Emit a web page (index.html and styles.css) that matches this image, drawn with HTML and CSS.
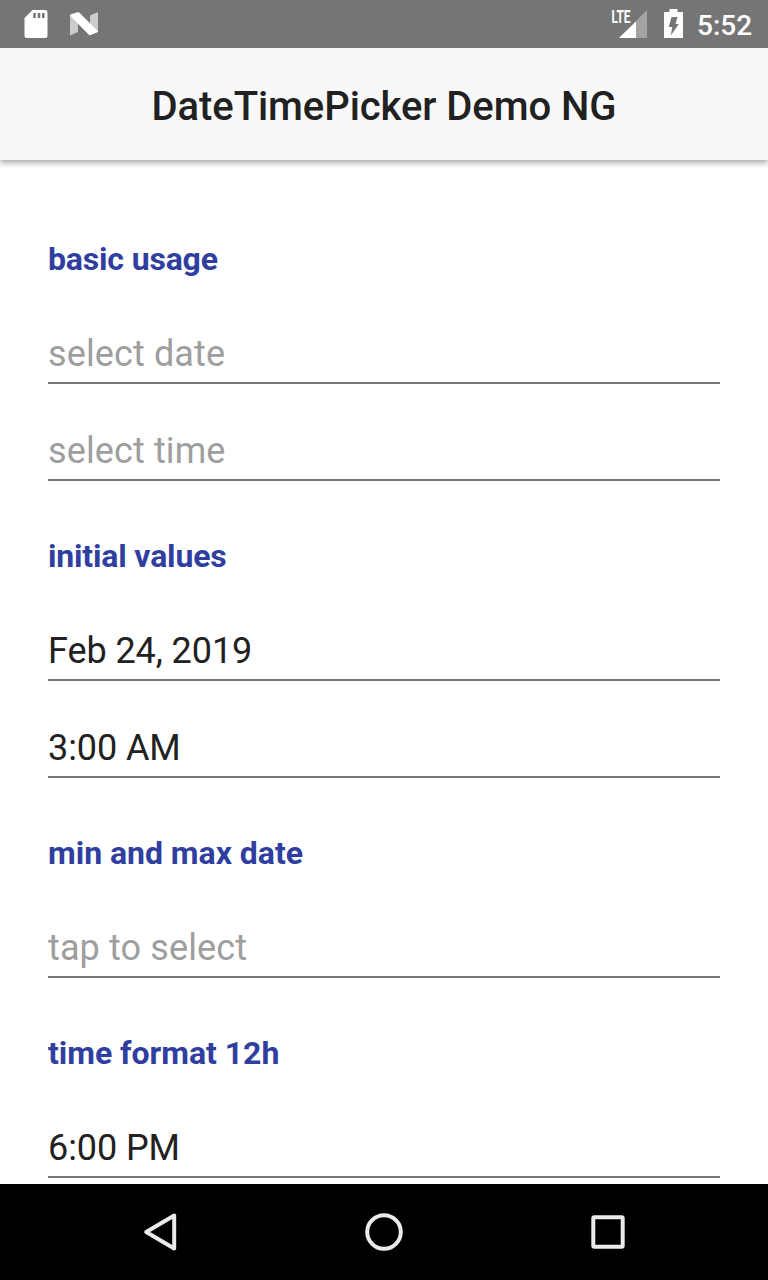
FILE: index.html
```html
<!DOCTYPE html>
<html lang="en">
<head>
<meta charset="utf-8">
<title>DateTimePicker Demo NG</title>
<link rel="stylesheet" href="styles.css">
</head>
<body>
<div class="screen">
  <header class="status">
    <svg class="status-left" width="110" height="48" viewBox="0 0 110 48">
      <path fill="#fff" d="M32.500 10H45q2.500 0 2.500 2.500v23q0 2.500-2.500 2.500H27q-2.500 0-2.500-2.500V18z"/>
      <path stroke="#757575" stroke-width="2.500" d="M34.500 13v5M39 13v5M43.300 13v5"/>
      <path fill="#ccc" d="M70 15l8 6v11l-8 3.500zM90 15.500l8-3.500v20l-8-6z"/>
      <path fill="#fff" d="M70 15.500q0-.8 1-1.200l6.500-2.100q1-.3 2 .6L98 31.200q0 .8-1 1.200l-6.500 2.700q-1 .3-2-.6z"/>
    </svg>
    <svg class="status-right" width="76" height="48" viewBox="610 0 76 48">
      <path fill="#a3a3a3" d="M647 10v28h-28z"/>
      <path fill="#fff" d="M636 21.500V38h-17z"/>
      <text class="network" x="611.500" y="22.800" textLength="19" lengthAdjust="spacingAndGlyphs">LTE</text>
      <path fill="#fff" d="M669.500 9h8v3h5.500v26h-19V12h5.500z"/>
      <path fill="#757575" d="M671.500 17h6l-2 7h3.300l-8 11.500 1.500-8.500h-3.500z"/>
    </svg>
    <span class="clock">5:52</span>
  </header>
  <div class="action-bar"><h1 class="title">DateTimePicker Demo NG</h1></div>
  <main class="content">
    <h2 class="label tight">basic usage</h2>
    <div class="field hint">select date</div>
    <div class="field hint">select time</div>
    <h2 class="label tight">initial values</h2>
    <div class="field">Feb 24, 2019</div>
    <div class="field">3:00 AM</div>
    <h2 class="label">min and max date</h2>
    <div class="field hint">tap to select</div>
    <h2 class="label">time format 12h</h2>
    <div class="field">6:00 PM</div>
  </main>
  <nav class="nav">
    <svg width="48" height="48" viewBox="136 1208 48 48"><path d="M174.200 1215.500v33l-28-16.500z"/></svg>
    <svg width="48" height="48" viewBox="360 1208 48 48"><circle cx="384" cy="1232" r="16.800"/></svg>
    <svg width="48" height="48" viewBox="584 1208 48 48"><rect x="593.300" y="1217.300" width="29.400" height="29.400" rx="1"/></svg>
  </nav>
</div>
</body>
</html>
```
FILE: styles.css
```css
body { margin: 0; background: #fff; font-family: Roboto, sans-serif; }
.screen { display: flex; flex-direction: column; height: 1280px; overflow: hidden; }
.status { display: flex; flex: none; height: 48px; background: #757575; color: #fff; }
.status-right { margin-left: auto; }
.network { fill: #fff; font-size: 18px; font-weight: 700; }
.clock { width: 82px; box-sizing: border-box; padding-left: 11px; font-size: 28px; line-height: 51px; font-weight: 500; white-space: nowrap; }
.action-bar { flex: none; display: flex; justify-content: center; height: 112px; background: #f8f8f8; box-shadow: 0 3px 6px rgba(0,0,0,.33); clip-path: inset(0 0 -12px); }
.title { margin: 0; font-size: 40px; line-height: 118px; letter-spacing: -.07px; font-weight: 500; color: #212121; white-space: nowrap; }
.content { flex: 1; min-height: 0; overflow: hidden; padding: 60px 48px 0; margin-top: 8px; }
.label { margin: 0; height: 103px; box-sizing: border-box; padding-top: 12px; font-size: 32px; line-height: 38px; letter-spacing: -.03px; font-weight: 700; color: #303f9f; }
.tight { letter-spacing: -.17px; }
.field { height: 53px; box-sizing: border-box; margin-bottom: 44px; border-bottom: 2px solid #757575; font-size: 36px; line-height: 46px; letter-spacing: -.08px; color: #212121; }
.hint { color: #9e9e9e; letter-spacing: .12px; }
.nav { flex: none; height: 96px; display: flex; justify-content: center; align-items: center; gap: 176px; background: #000; }
.nav svg { fill: none; stroke: #ebebeb; stroke-width: 4; stroke-linejoin: round; }
```
